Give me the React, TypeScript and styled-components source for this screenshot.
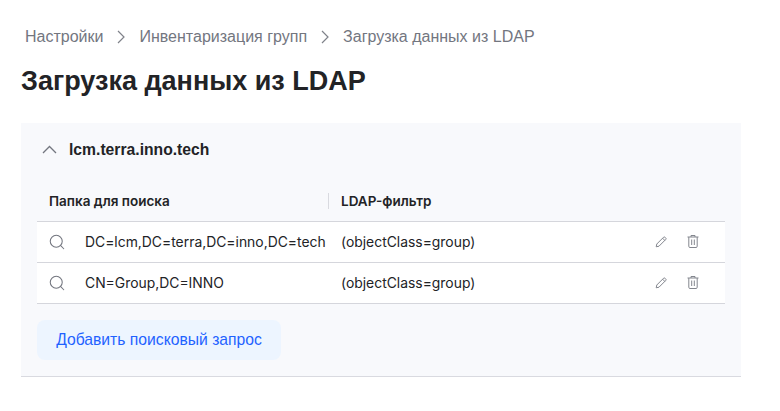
import styled, {createGlobalStyle} from "styled-components";
import {Search} from "lucide-react";

const GlobalStyle = createGlobalStyle`
  html, body {
    margin: 0;
    background: #fff;
    font-family: Inter, "Liberation Sans", sans-serif;
    color: #222326;
  }
`;

const sans = `"Liberation Sans", Arial, sans-serif`;

const Page = styled.div`
  width: 780px;
  height: 411px;
  box-sizing: border-box;
  padding: 27px 39px 0 21px;
  overflow: hidden;
`;

const Breadcrumbs = styled.nav`
  display: flex;
  align-items: center;
  height: 20px;
  padding-left: 4px;
  font-family: ${sans};
  font-size: 16px;
  line-height: 20px;
  color: #73767f;
`;

const CrumbIcon = styled.svg`
  flex: none;
  margin: 0 14px;
  color: #7f828a;
`;

const Title = styled.h1`
  margin: 12px 0 0;
  height: 44px;
  font-family: ${sans};
  font-size: 27px;
  line-height: 44px;
  font-weight: 700;
  color: #222326;
`;

const Card = styled.section`
  margin-top: 20px;
  padding: 0 16px 16px;
  background: #f8f9fc;
  border-bottom: 1px solid #d9dae0;
`;

const CardHeader = styled.div`
  display: flex;
  align-items: center;
  height: 53px;
  padding-left: 5px;
  font-family: ${sans};
  font-size: 15.7px;
  font-weight: 700;
`;

const CollapseIcon = styled.svg`
  flex: none;
  margin-right: 12px;
  color: #73767f;
`;

const HeadRow = styled.div`
  display: grid;
  grid-template-columns: 291px 1fr;
  align-items: center;
  box-sizing: border-box;
  height: 46px;
  padding-top: 4px;
  border-bottom: 1px solid #d5d6dc;
  font-size: 13.5px;
  font-weight: 600;
`;

const HeadCell = styled.div<{$divided?: boolean}>`
  padding-left: 12px;
  border-left: ${p => (p.$divided ? "1px solid #d9dae0" : "none")};
  line-height: 16px;
`;

const Row = styled.div`
  display: grid;
  grid-template-columns: 48px 256px 1fr 70px;
  align-items: center;
  box-sizing: border-box;
  height: 41px;
  padding-bottom: 1px;
  background: #fff;
  border-bottom: 1px solid #d5d6dc;
  font-size: 13.9px;
`;

const SearchIcon = styled(Search)`
  justify-self: center;
  margin-left: -8px;
  color: #73767f;
`;

const Actions = styled.div`
  display: flex;
  align-items: center;
  gap: 20px;
  color: #83868e;
`;

const AddButton = styled.button`
  display: block;
  margin-top: 16px;
  width: 244px;
  height: 40px;
  padding: 0;
  border: none;
  border-radius: 8px;
  background: #edf5ff;
  color: #1f62ff;
  font-family: ${sans};
  font-size: 15.7px;
`;

const Crumb = () => (
  <CrumbIcon width="8" height="14" viewBox="0 0 8 14" fill="none" stroke="currentColor" strokeWidth="1.2">
    <path d="M1 1 7 7 1 13" />
  </CrumbIcon>
);

const PencilIcon = () => (
  <svg width="12" height="12" viewBox="0 0 12 12" fill="none" stroke="currentColor" strokeWidth="1">
    <path d="M1.2 10.8 1.8 8 8.6 1.2a.9.9 0 0 1 1.3 0l.9.9a.9.9 0 0 1 0 1.3L4 10.2z" />
    <path d="M7.6 2.2 9.8 4.4" />
  </svg>
);

const TrashIcon = () => (
  <svg width="12" height="13" viewBox="0 0 12 13" fill="none" stroke="currentColor" strokeWidth="1">
    <path d="M.5 2h11M4 2V.5h4V2" />
    <path d="M1.8 2v9.3a1.2 1.2 0 0 0 1.2 1.2h6a1.2 1.2 0 0 0 1.2-1.2V2" />
    <path d="M4.7 4.5v5.5M7.3 4.5v5.5" />
  </svg>
);

const rows = [
  {folder: "DC=lcm,DC=terra,DC=inno,DC=tech", filter: "(objectClass=group)"},
  {folder: "CN=Group,DC=INNO", filter: "(objectClass=group)"}
];

const App = () => (
  <Page>
    <GlobalStyle />
    <Breadcrumbs>
      Настройки
      <Crumb />
      Инвентаризация групп
      <Crumb />
      Загрузка данных из LDAP
    </Breadcrumbs>
    <Title>Загрузка данных из LDAP</Title>
    <Card>
      <CardHeader>
        <CollapseIcon width="15" height="9" viewBox="0 0 15 9" fill="none" stroke="currentColor" strokeWidth="1.3">
          <path d="M1 8 7.5 1.5 14 8" />
        </CollapseIcon>
        lcm.terra.inno.tech
      </CardHeader>
      <HeadRow>
        <HeadCell>Папка для поиска</HeadCell>
        <HeadCell $divided>LDAP-фильтр</HeadCell>
      </HeadRow>
      {rows.map(row => (
        <Row key={row.folder}>
          <SearchIcon size={18} strokeWidth={1.4} />
          <span>{row.folder}</span>
          <span>{row.filter}</span>
          <Actions>
            <PencilIcon />
            <TrashIcon />
          </Actions>
        </Row>
      ))}
      <AddButton>Добавить поисковый запрос</AddButton>
    </Card>
  </Page>
);

export default App;
